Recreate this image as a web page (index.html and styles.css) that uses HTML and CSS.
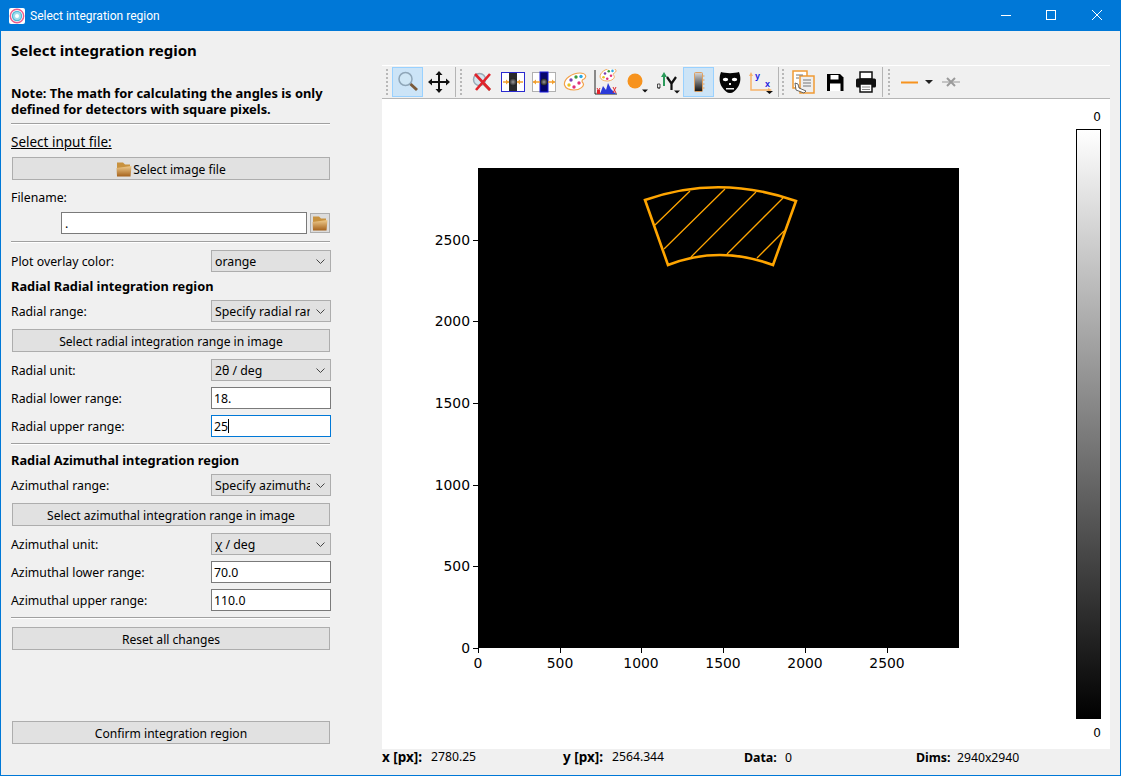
FILE: index.html
```html
<!DOCTYPE html>
<html lang="en">
<head>
    <meta charset="UTF-8">
    <title>Select integration region</title>
    <link rel="stylesheet" href="styles.css">
</head>
<body>
    <svg class="defs" width="0" height="0">
        <defs>
            <linearGradient id="folderFront" x1="0" y1="0" x2="0" y2="1">
                <stop offset="0" stop-color="#efcb8c"/>
                <stop offset="1" stop-color="#a5621c"/>
            </linearGradient>
            <linearGradient id="barGrey" x1="0" y1="0" x2="0" y2="1">
                <stop offset="0" stop-color="#ffffff"/>
                <stop offset="1" stop-color="#000000"/>
            </linearGradient>
            <linearGradient id="stripGrey" x1="0" y1="0" x2="0" y2="1">
                <stop offset="0" stop-color="#d8d8d8"/>
                <stop offset="1" stop-color="#111111"/>
            </linearGradient>
            <radialGradient id="glow">
                <stop offset="0" stop-color="#9a9a9a"/>
                <stop offset="1" stop-color="#1c1c1c"/>
            </radialGradient>
            <symbol id="folder" viewBox="0 0 16 16">
                <path d="M1 1.500h6l2 2h5v5H1z" fill="#c8923f"/>
                <path d="M0.500 7 L15.500 5 L14.500 15.500 H1z" fill="url(#folderFront)"/>
            </symbol>
            <symbol id="palette" viewBox="0 0 24 24">
                <path d="M1.500 15C0.500 9 9 3 17 3c6 0 7 4 4 6-3 1-2 3-1 4 2 3-3 7-9 7-5 0-8.500-2-9.500-5z" fill="#fff" stroke="#f2a24a" stroke-width="1.200"/>
                <circle cx="8" cy="10" r="1.700" fill="#7a3fb0"/>
                <circle cx="13" cy="7" r="1.700" fill="#3c9a3c"/>
                <circle cx="18" cy="6.500" r="1.700" fill="#29a7e0"/>
                <circle cx="6" cy="15" r="1.700" fill="#e8c020"/>
                <circle cx="11" cy="17" r="1.700" fill="#e0307a"/>
                <circle cx="16" cy="13" r="1.700" fill="#e0307a"/>
            </symbol>
        </defs>
    </svg>

    <div class="window">
        <header class="titlebar">
            <svg class="app-icon" width="16" height="16" viewBox="0 0 16 16">
                <rect width="16" height="16" rx="2" fill="#fff"/>
                <circle cx="8" cy="8" r="6.700" fill="none" stroke="#ec5c8c" stroke-width="1.400"/>
                <circle cx="8" cy="8" r="4.600" fill="#9fdcec" stroke="#4fb8d8" stroke-width="1.200"/>
                <circle cx="8" cy="8" r="2" fill="#fff"/>
            </svg>
            <span class="title-text">Select integration region</span>
            <div class="win-btns">
                <svg class="win-btn" width="46" height="30" viewBox="0 0 46 30"><path d="M19 14.500h10" stroke="#fff"/></svg>
                <svg class="win-btn" width="46" height="30" viewBox="0 0 46 30"><rect x="18.500" y="9.500" width="9" height="9" fill="none" stroke="#fff"/></svg>
                <svg class="win-btn" width="46" height="30" viewBox="0 0 46 30"><path d="M18 9l10 10M28 9l-10 10" stroke="#fff"/></svg>
            </div>
        </header>

        <div class="content">
            <aside class="panel">
                <h1 class="panel-title">Select integration region</h1>
                <p class="note">Note: The math for calculating the angles is only defined for detectors with square pixels.</p>
                <hr class="sep">
                <div class="file-label">Select input file:</div>
                <button class="btn"><svg width="16" height="16"><use href="#folder"/></svg>Select image file</button>
                <div class="label filename">Filename:</div>
                <div class="file-row">
                    <div class="field file-field">.</div>
                    <button class="folder-btn"><svg width="16" height="16"><use href="#folder"/></svg></button>
                </div>
                <hr class="sep mt1">

                <div class="row mt1">
                    <span class="label">Plot overlay color:</span>
                    <div class="combo"><span class="combo-text">orange</span><svg width="9" height="5" viewBox="0 0 9 5"><path d="M0.500 0.500l4 4 4-4" fill="none" stroke="#444"/></svg></div>
                </div>
                <h2 class="group mt1">Radial Radial integration region</h2>
                <div class="row mt1">
                    <span class="label">Radial range:</span>
                    <div class="combo"><span class="combo-text">Specify radial range</span><svg width="9" height="5" viewBox="0 0 9 5"><path d="M0.500 0.500l4 4 4-4" fill="none" stroke="#444"/></svg></div>
                </div>
                <button class="btn mt1">Select radial integration range in image</button>
                <div class="row mt1">
                    <span class="label">Radial unit:</span>
                    <div class="combo"><span class="combo-text">2θ / deg</span><svg width="9" height="5" viewBox="0 0 9 5"><path d="M0.500 0.500l4 4 4-4" fill="none" stroke="#444"/></svg></div>
                </div>
                <div class="row">
                    <span class="label">Radial lower range:</span>
                    <div class="field">18.</div>
                </div>
                <div class="row">
                    <span class="label">Radial upper range:</span>
                    <div class="field focused">25<i class="caret"></i></div>
                </div>
                <hr class="sep">

                <h2 class="group mt2">Radial Azimuthal integration region</h2>
                <div class="row mt1">
                    <span class="label">Azimuthal range:</span>
                    <div class="combo"><span class="combo-text">Specify azimuthal range</span><svg width="9" height="5" viewBox="0 0 9 5"><path d="M0.500 0.500l4 4 4-4" fill="none" stroke="#444"/></svg></div>
                </div>
                <button class="btn mt1">Select azimuthal integration range in image</button>
                <div class="row mt1">
                    <span class="label">Azimuthal unit:</span>
                    <div class="combo"><span class="combo-text">χ / deg</span><svg width="9" height="5" viewBox="0 0 9 5"><path d="M0.500 0.500l4 4 4-4" fill="none" stroke="#444"/></svg></div>
                </div>
                <div class="row">
                    <span class="label">Azimuthal lower range:</span>
                    <div class="field">70.0</div>
                </div>
                <div class="row">
                    <span class="label">Azimuthal upper range:</span>
                    <div class="field">110.0</div>
                </div>
                <hr class="sep">
                <button class="btn mt2">Reset all changes</button>
                <button class="btn confirm">Confirm integration region</button>
            </aside>

            <main class="viewer">
                <div class="toolbar">
                    <span class="grip"></span>
                    <span class="tool active">
                        <svg width="24" height="24" viewBox="0 0 24 24"><circle cx="9.500" cy="9" r="6.500" fill="#cfe6f5" stroke="#8fa6b8" stroke-width="1.500"/><path d="M14.500 14l6.500 6" stroke="#7a5a3a" stroke-width="3"/></svg>
                    </span>
                    <span class="tool">
                        <svg width="24" height="24" viewBox="0 0 24 24"><path d="M12 3v18M3 12h18" stroke="#111" stroke-width="2"/><path d="M12 1l3.500 4h-7zM12 23l3.500-4h-7zM1 12l4-3.500v7zM23 12l-4-3.500v7z" fill="#111"/></svg>
                    </span>
                    <span class="tool-sep"></span>
                    <span class="grip"></span>
                    <span class="tool">
                        <svg width="24" height="24" viewBox="0 0 24 24"><circle cx="9.500" cy="9.500" r="6" fill="#d5e6f0" stroke="#9aaab5" stroke-width="1.500"/><path d="M14 14l6 6" stroke="#8a6a4a" stroke-width="2.500"/><path d="M5 4l15 16M20 4L6 20" stroke="#e0242c" stroke-width="2.600"/></svg>
                    </span>
                    <span class="tool">
                        <svg width="24" height="24" viewBox="0 0 24 24"><rect x="0.500" y="2.500" width="23" height="19" fill="#fff" stroke="#2a2ad0" stroke-width="1"/><rect x="8" y="3" width="8" height="18" fill="#2a2a2a"/><circle cx="12" cy="12" r="4" fill="url(#glow)"/><path d="M2 12h6M22 12h-6" stroke="#f2a030" stroke-width="1.500"/><path d="M8 12l-3-2.500v5zM16 12l3-2.500v5z" fill="#f2a030"/></svg>
                    </span>
                    <span class="tool">
                        <svg width="24" height="24" viewBox="0 0 24 24"><rect x="0.500" y="2.500" width="23" height="19" fill="#fff" stroke="#b0b0b0" stroke-width="1"/><rect x="8" y="2" width="8" height="20" fill="#05056a" stroke="#1a1ae0"/><circle cx="12" cy="12" r="3.500" fill="url(#glow)"/><path d="M1 12h7M23 12h-7" stroke="#f2a030" stroke-width="1.500"/><path d="M1 12l3-2.500v5zM23 12l-3-2.500v5z" fill="#f2a030"/></svg>
                    </span>
                    <span class="tool"><svg width="24" height="24"><use href="#palette"/></svg></span>
                    <span class="tool">
                        <svg width="24" height="26" viewBox="0 0 24 26"><path d="M1 1v24h22" fill="none" stroke="#222"/><rect x="3" y="21" width="3" height="4" fill="#e0242c"/><path d="M6 25l3-8 3 4 2-7 3 6 2 2 3 3z" fill="#2a3ad8"/><path d="M3 19l3 5M6 19l-3 5M19 18l3 6M22 18l-3 6" stroke="#e0242c"/><use href="#palette" x="3" y="-3" width="22" height="18"/></svg>
                    </span>
                    <span class="tool">
                        <svg width="24" height="24" viewBox="0 0 24 24"><circle cx="10" cy="11" r="7.500" fill="#f7931e"/><path d="M17 19.500h6l-3 3z" fill="#111"/></svg>
                    </span>
                    <span class="tool">
                        <svg width="24" height="24" viewBox="0 0 24 24"><path d="M8 16V5" stroke="#2a9a5a" stroke-width="2"/><path d="M8 2l3 5H5z" fill="#2a9a5a"/><path d="M1.500 14h2.500v4H1.500zM2 18h2" fill="none" stroke="#222" stroke-width="0.800"/><path d="M11 7l4.500 6.500V20M20 7l-4.500 6.500" fill="none" stroke="#111" stroke-width="2.200"/><path d="M18 20.500h6l-3 3z" fill="#111"/></svg>
                    </span>
                    <span class="tool active">
                        <svg width="24" height="24" viewBox="0 0 24 24"><rect x="7.500" y="2.500" width="8" height="19" rx="1" fill="url(#stripGrey)" stroke="#e0a060"/><path d="M15.500 6h2M15.500 10h2M15.500 14h2M15.500 18h2" stroke="#e0a060"/></svg>
                    </span>
                    <span class="tool">
                        <svg width="24" height="24" viewBox="0 0 24 24"><path d="M3 2c4 1.500 14 1.500 18 0 2 5 2 10-1 15-3 4-5 6-8 6s-5-2-8-6C1 12 1 7 3 2z" fill="#050505"/><ellipse cx="7.500" cy="9.500" rx="2.700" ry="1.800" fill="#fff"/><ellipse cx="16.500" cy="9.500" rx="2.700" ry="1.800" fill="#fff"/><path d="M11 13h2v2h-2zM8 18h8v1.500H8z" fill="#eee"/></svg>
                    </span>
                    <span class="tool">
                        <svg width="24" height="24" viewBox="0 0 24 24"><path d="M2 4v16h19" fill="none" stroke="#f6b36a" stroke-width="1.500"/><path d="M2 2l-2 4h4zM23 20l-4-2v4z" fill="#f6b36a"/><text x="6" y="9" class="axis-letter">y</text><text x="16" y="17" class="axis-letter">x</text><path d="M17 21h7l-3.500 3z" fill="#111"/></svg>
                    </span>
                    <span class="tool-sep wide"></span>
                    <span class="grip"></span>
                    <span class="tool">
                        <svg width="24" height="24" viewBox="0 0 24 24"><rect x="1" y="1" width="14" height="17" fill="#fff" stroke="#ef9a35" stroke-width="1.500"/><rect x="8" y="6" width="14" height="17" fill="#eee" stroke="#ef9a35" stroke-width="1.500"/><path d="M4 5h7M4 8h3M11 10h8M11 13h8M11 16h8" stroke="#777"/><path d="M3 13l3 1 1 4 7 3-2 2-8-3z" fill="#fff" stroke="#444" stroke-width="0.800"/></svg>
                    </span>
                    <span class="tool">
                        <svg width="24" height="24" viewBox="0 0 24 24"><path d="M4 4h13l3.500 3.500V21H4z" fill="#000"/><rect x="7.500" y="5" width="8" height="4.500" fill="#fff"/><rect x="7" y="13.500" width="10.500" height="7.500" fill="#fff"/></svg>
                    </span>
                    <span class="tool">
                        <svg width="24" height="24" viewBox="0 0 24 24"><rect x="6" y="2" width="12" height="7" fill="#fff" stroke="#111" stroke-width="1.500"/><rect x="2" y="8.500" width="20" height="9" rx="1.500" fill="#111"/><rect x="6" y="14" width="12" height="8" fill="#fff" stroke="#111" stroke-width="1.500"/><path d="M8 17h8M8 19.500h8" stroke="#888"/></svg>
                    </span>
                    <span class="tool-sep narrow"></span>
                    <span class="grip"></span>
                    <span class="tool">
                        <svg width="24" height="24" viewBox="0 0 24 24"><path d="M3 12.500h17" stroke="#f7931e" stroke-width="2"/></svg>
                    </span>
                    <svg class="tool-arrow" width="8" height="4" viewBox="0 0 8 4"><path d="M0 0h8l-4 4z" fill="#222"/></svg>
                    <span class="tool small">
                        <svg width="20" height="20" viewBox="0 0 20 20"><path d="M1 10h18" stroke="#c4c4c4" stroke-width="2"/><path d="M6 6l8 8M14 6l-8 8" stroke="#9a9a9a" stroke-width="2"/></svg>
                    </span>
                </div>

                <div class="plot">
                    <svg class="plot-svg" width="728" height="650" viewBox="382 99 728 650">
                        <rect x="478" y="168" width="481" height="480" fill="#000"/>

                        <g class="ticks">
                            <path d="M478.500 648v5M560.500 648v5M641.500 648v5M723.500 648v5M805.500 648v5M887.500 648v5"/>
                            <path d="M473 648.500h5M473 566.500h5M473 485.500h5M473 403.500h5M473 321.500h5M473 240.500h5"/>
                        </g>
                        <g class="tick-labels x-labels">
                            <text x="478" y="668">0</text>
                            <text x="560" y="668">500</text>
                            <text x="641" y="668">1000</text>
                            <text x="723" y="668">1500</text>
                            <text x="805" y="668">2000</text>
                            <text x="887" y="668">2500</text>
                        </g>
                        <g class="tick-labels y-labels">
                            <text x="470" y="653">0</text>
                            <text x="470" y="571">500</text>
                            <text x="470" y="490">1000</text>
                            <text x="470" y="408">1500</text>
                            <text x="470" y="326">2000</text>
                            <text x="470" y="245">2500</text>
                        </g>

                        <g class="hatch">
                            <path d="M655 225L690 191M664 249L725 189M691 257L756 192M727 254L783 198M757 258L784 231"/>
                        </g>
                        <path class="wedge" d="M645 200Q719 174 796 201L773 265Q719 245 668 265Z"/>

                        <rect x="1076.500" y="129.500" width="24" height="589" fill="url(#barGrey)" stroke="#000"/>
                        <text class="bar-label" x="1097" y="121">0</text>
                        <text class="bar-label" x="1097" y="737">0</text>
                    </svg>
                </div>

                <div class="statusbar">
                    <span class="stat stat-x"><b class="stat-key">x [px]:</b>2780.25</span>
                    <span class="stat stat-y"><b class="stat-key">y [px]:</b>2564.344</span>
                    <span class="stat stat-data"><b class="stat-key short">Data:</b>0</span>
                    <span class="stat"><b class="stat-key short">Dims:</b>2940x2940</span>
                </div>
            </main>
        </div>
    </div>
</body>
</html>
```

FILE: styles.css
```css
* {
    box-sizing: border-box;
}

body {
    margin: 0;
    background-color: #f0f0f0;
    font-family: "Noto Sans", "Open Sans", sans-serif;
    font-size: 12.3px;
    color: #000;
}

.defs {
    position: absolute;
}

.window {
    display: flex;
    flex-direction: column;
    width: 1121px;
    height: 776px;
    border: 1px solid #0078d7;
    background-color: #f0f0f0;
    overflow: hidden;
}

.titlebar {
    display: flex;
    align-items: center;
    flex: none;
    height: 30px;
    padding-left: 8px;
    background-color: #0078d7;
    color: #fff;
}

.app-icon {
    flex: none;
}

.title-text {
    margin-left: 5px;
    font-family: Roboto, sans-serif;
    font-size: 12px;
}

.win-btns {
    display: flex;
    margin-left: auto;
}

.win-btn {
    display: block;
}

.content {
    display: flex;
    flex: 1;
    min-height: 0;
}

/* left column */
.panel {
    display: flex;
    flex-direction: column;
    gap: 6px;
    flex: none;
    width: 381px;
    padding: 11px 50px 31px 10px;
}

.panel-title {
    height: 17px;
    margin: 0;
    font-size: 15px;
    font-weight: bold;
    line-height: 16px;
}

.note {
    height: 32px;
    margin: 20px 0 0;
    font-size: 12.9px;
    font-weight: bold;
    line-height: 16px;
}

.sep {
    flex: none;
    width: 319px;
    height: 2px;
    margin: 0;
    border: none;
    border-top: 1px solid #a0a0a0;
    border-bottom: 1px solid #fff;
}

.mt1 {
    margin-top: 1px;
}

.mt2 {
    margin-top: 2px;
}

.file-label {
    height: 20px;
    padding-top: 1px;
    font-size: 13.5px;
    line-height: 20px;
    text-decoration: underline;
}

.btn {
    display: flex;
    align-items: center;
    justify-content: center;
    flex: none;
    width: 318px;
    height: 23px;
    margin-left: 1px;
    padding: 2px 0 0;
    background-color: #e1e1e1;
    border: 1px solid #adadad;
    font: inherit;
    font-size: 12.1px;
    color: #000;
}

.btn svg {
    margin: -2px 1px 0 0;
}

.confirm {
    margin-top: auto;
}

.label {
    line-height: 16px;
}

.row .label {
    padding-top: 1px;
}

.filename {
    height: 16px;
    margin-top: 4px;
}

.file-row {
    display: flex;
    justify-content: flex-end;
    gap: 3px;
    width: 319px;
    height: 22px;
}

.row {
    display: flex;
    align-items: center;
    justify-content: space-between;
    flex: none;
    width: 320px;
    height: 22px;
}

.field {
    display: flex;
    align-items: center;
    width: 120px;
    height: 22px;
    padding-left: 2px;
    background-color: #fff;
    border: 1px solid #7a7a7a;
}

.file-field {
    width: 246px;
    padding-left: 3px;
}

.focused {
    border-color: #0078d7;
}

.caret {
    display: block;
    width: 1px;
    height: 14px;
    background-color: #000;
}

.folder-btn {
    display: flex;
    align-items: center;
    justify-content: center;
    width: 20px;
    height: 20px;
    margin-top: 1px;
    padding: 0;
    background-color: #dcdcdc;
    border: 1px solid #adadad;
}

.combo {
    display: flex;
    align-items: center;
    width: 120px;
    height: 22px;
    padding: 0 5px 0 3px;
    background-color: #e1e1e1;
    border: 1px solid #adadad;
}

.combo-text {
    flex: 1;
    overflow: hidden;
    white-space: nowrap;
}

.combo svg {
    flex: none;
    margin-left: 6px;
}

.group {
    height: 14px;
    margin-bottom: 0;
    font-size: 12.8px;
    font-weight: bold;
    line-height: 15px;
}

/* right column */
.viewer {
    display: flex;
    flex-direction: column;
    flex: none;
    width: 728px;
    padding-top: 34px;
}

.toolbar {
    display: flex;
    align-items: center;
    flex: none;
    height: 34px;
    padding: 1px 0 1px 4px;
    border-top: 1px solid #fff;
    border-bottom: 1px solid #b5b5b5;
}

.grip {
    flex: none;
    width: 2px;
    height: 26px;
    margin-right: 4px;
    background-image: repeating-linear-gradient(#b8b8b8 0 2px, transparent 2px 4px);
}

.tool {
    display: flex;
    align-items: center;
    justify-content: center;
    flex: none;
    width: 31px;
    height: 30px;
    border: 1px solid transparent;
}

.tool.active {
    background-color: #cce4f7;
    border-color: #99d1ff;
}

.tool.small {
    width: 26px;
    margin-left: 5px;
}

.tool-sep {
    flex: none;
    width: 1px;
    height: 30px;
    margin: 0 4px 0 1px;
    background-color: #b5b5b5;
}

.tool-sep.wide {
    margin-left: 2px;
    margin-right: 3px;
}

.tool-sep.narrow {
    margin-left: 1px;
    margin-right: 5px;
}

.tool-arrow {
    flex: none;
}

.axis-letter {
    font-family: "Liberation Sans", sans-serif;
    font-size: 9px;
    font-weight: bold;
    fill: #1a1ae0;
}

.plot {
    flex: none;
    height: 650px;
    background-color: #fff;
}

.plot-svg {
    display: block;
}

.ticks path {
    fill: none;
    stroke: #000;
    stroke-width: 1;
}

.tick-labels text,
.bar-label {
    font-family: "DejaVu Sans", sans-serif;
    font-size: 13.9px;
    fill: #000;
}

.x-labels text {
    text-anchor: middle;
}

.y-labels text {
    text-anchor: end;
}

.bar-label {
    font-size: 12px;
    text-anchor: middle;
}

.hatch path {
    fill: none;
    stroke: #ffa500;
    stroke-width: 1.300;
}

.wedge {
    fill: none;
    stroke: #ffa500;
    stroke-width: 2.600;
    stroke-linejoin: miter;
}

.statusbar {
    display: flex;
    align-items: center;
    flex: none;
    height: 16px;
    font-size: 12.200px;
}

.stat {
    display: flex;
    flex: none;
    width: 172px;
    white-space: nowrap;
}

.stat-x,
.stat-y {
    width: 181px;
}

.stat-key {
    flex: none;
    width: 49px;
    font-size: 13.500px;
}

.stat-key.short {
    width: 41px;
    font-size: 12.400px;
}
```
